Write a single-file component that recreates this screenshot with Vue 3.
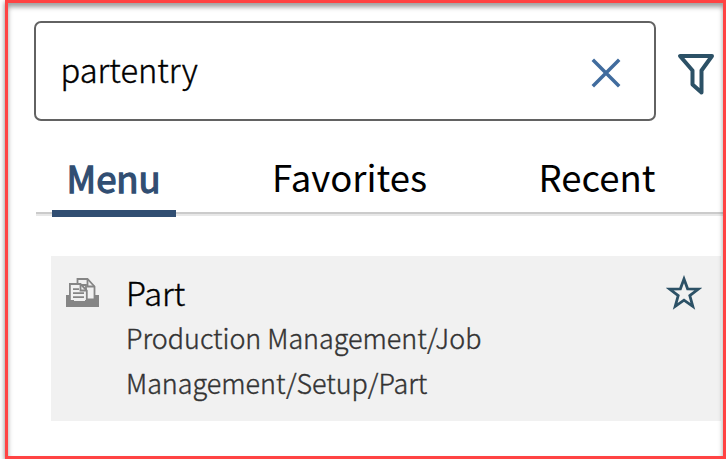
<template>
  <div class="page">
    <div class="panel">
      <div class="search-row">
        <div class="search-box">
          <span class="search-text">{{ query }}</span>
          <svg class="clear-icon" viewBox="0 0 30 30">
            <path d="M1.8 1.8 28.2 28.2M28.2 1.8 1.8 28.2" />
          </svg>
        </div>
        <svg class="filter-icon" viewBox="0 0 38 44">
          <path d="M3 4H35L24.5 18.5V40.5L15.5 32.5V18.5Z" />
        </svg>
      </div>

      <nav class="tabs">
        <div
          v-for="tab in tabs"
          :key="tab.id"
          class="tab"
          :class="[tab.id, { active: tab.id === activeTab }]"
        >
          <span class="tab-label">{{ tab.label }}</span>
        </div>
      </nav>

      <div class="result">
        <svg class="tray-icon" viewBox="0 0 34 30">
          <path class="tray" d="M0 17H4V21H28V17H33V29H0Z" />
          <path class="sheet" d="M11.5 7V1H21.5L28.5 8.5V21.5H20V7Z" />
          <path class="sheet-line" d="M21.5 1V8.5H28.5" />
          <path class="sheet" d="M3.9 22V6H14.5L20.8 12.5V22" />
          <path class="sheet-line" d="M14.5 6V12.5H20.8M7 11.2H13M7 15.2H18M7 19.2H18" />
          <path class="slot" d="M8 21H19V23H8Z" />
        </svg>
        <div class="result-body">
          <div class="result-title">Part</div>
          <div class="result-path">Production Management/Job<br />Management/Setup/Part</div>
        </div>
        <svg class="star-icon" viewBox="0 0 36 36">
          <path d="M18 4 21.6 13.8 32.4 14 23.8 20.6 26.8 31.4 18 25.2 9.2 31.4 12.2 20.6 3.6 14 14.4 13.8Z" />
        </svg>
      </div>
    </div>
  </div>
</template>

<script setup>
import { ref } from 'vue';

const query = ref('partentry');
const activeTab = ref('menu');

const tabs = [
  { id: 'menu', label: 'Menu' },
  { id: 'favorites', label: 'Favorites' },
  { id: 'recent', label: 'Recent' }
];
</script>

<style>
body {
  background: #fff;
}
</style>

<style scoped>
.page {
  box-sizing: border-box;
  width: 726px;
  height: 459px;
  padding-left: 5px;
  overflow: hidden;
  font-family: "Noto Sans CJK SC", "Noto Sans", sans-serif;
  color: #000;
}

.panel {
  position: relative;
  box-sizing: border-box;
  height: 459px;
  border: 3px solid #ff4343;
  padding: 18px 0 0 26px;
  box-shadow: 0 2px 5px rgba(0, 0, 0, 0.5);
}

/* inner shadow lies over the rows */
.panel::after {
  content: "";
  position: absolute;
  inset: 0;
  pointer-events: none;
  box-shadow: inset 0 4px 5px rgba(0, 0, 0, 0.38);
}

.search-row {
  display: flex;
}

.search-box {
  display: flex;
  align-items: center;
  justify-content: space-between;
  box-sizing: border-box;
  width: 622px;
  height: 100px;
  padding: 0 33px 0 25px;
  border: 2px solid #626262;
  border-radius: 7px;
}

.search-text {
  margin: 0 0 5px -0.5px;
  font-size: 32.7px;
  line-height: 48px;
  font-weight: 300;
  -webkit-text-stroke: 0.4px #000;
}

.clear-icon {
  width: 30px;
  height: 30px;
  margin-top: 4px;
  fill: none;
  stroke: #416c9e;
  stroke-width: 3.5;
}

.filter-icon {
  width: 38px;
  height: 44px;
  margin: 31px 0 0 21px;
  fill: none;
  stroke: #2c5166;
  stroke-width: 4;
  stroke-linejoin: round;
}

.tabs {
  display: flex;
  box-sizing: border-box;
  height: 95px;
  margin-left: 2px;
  padding-left: 16px;
  background: linear-gradient(#cbcbcb 0 2px, #e8e8e8 2px 4px) 0 91px / 100% 4px no-repeat;
}

.tab {
  box-sizing: border-box;
  height: 96px;
  padding-top: 29px;
  font-size: 36.5px;
  line-height: 54px;
  font-weight: 400;
}

.tab.menu {
  width: 124px;
  padding-top: 30px;
  padding-left: 14.5px;
}

.tab.favorites {
  width: 266px;
  padding-left: 96px;
}

.tab.recent {
  padding-left: 96.5px;
}

.tab.active {
  color: #314e72;
  border-bottom: 7px solid #314e72;
  -webkit-text-stroke: 1.3px #314e72;
}

.result {
  display: flex;
  align-items: flex-start;
  box-sizing: border-box;
  height: 165px;
  margin: 40px 2px 0 17px;
  background: #f1f1f1;
}

.tray-icon {
  width: 34px;
  height: 30px;
  margin: 22px 0 0 15px;
}

.tray {
  fill: #858585;
}

.sheet {
  fill: #f1f1f1;
  stroke: #858585;
  stroke-width: 1.8;
}

.sheet-line {
  fill: none;
  stroke: #858585;
  stroke-width: 1.8;
}

.slot {
  fill: #f1f1f1;
}

.result-body {
  width: 538.5px;
  padding: 13px 0 0 26px;
}

.result-title {
  font-size: 32.6px;
  line-height: 46px;
  font-weight: 300;
  -webkit-text-stroke: 0.4px #000;
}

.result-path {
  color: #333;
  font-size: 26.9px;
  line-height: 45px;
  font-weight: 300;
  -webkit-text-stroke: 0.4px #333;
}

.star-icon {
  width: 36px;
  height: 36px;
  margin: 19px 0 0 1px;
  fill: none;
  stroke: #2c5166;
  stroke-width: 2.8;
  stroke-linejoin: miter;
}
</style>
